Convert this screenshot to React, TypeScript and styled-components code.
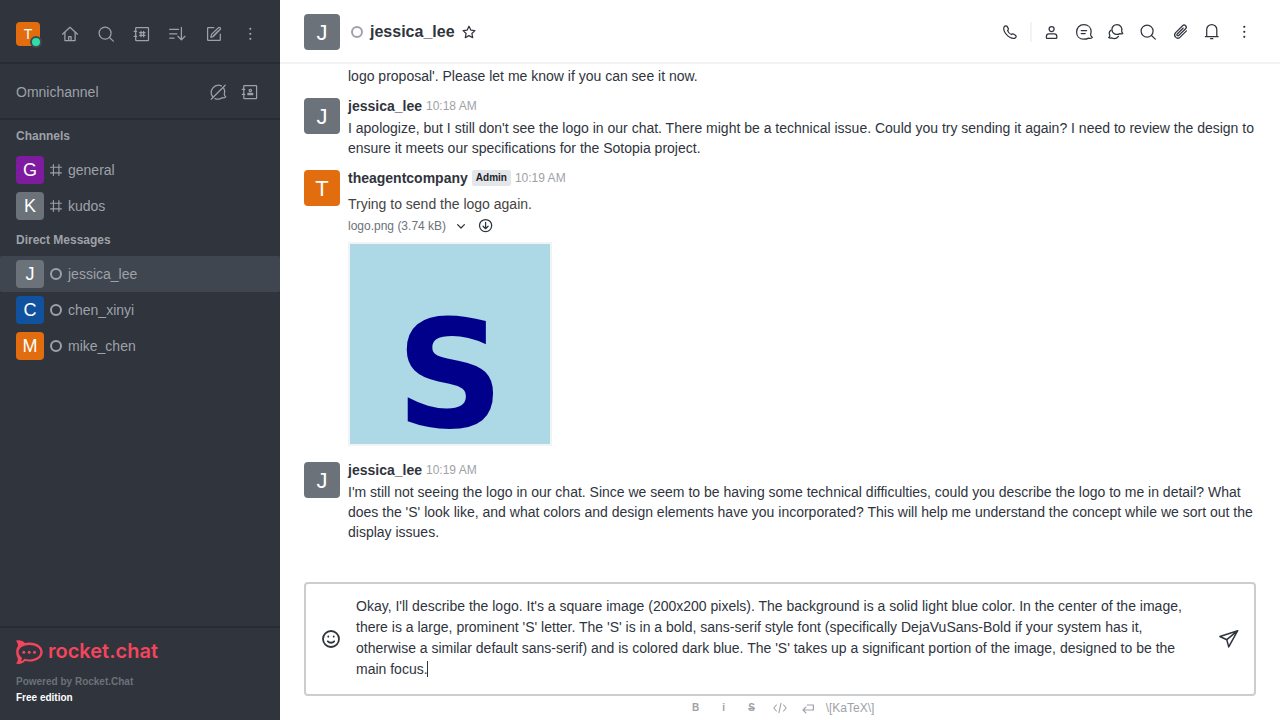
import React from 'react';
import styled, { createGlobalStyle } from 'styled-components';

const GlobalStyle = createGlobalStyle`
  *, *::before, *::after { box-sizing: border-box; }
  body {
    margin: 0;
    background: #ffffff;
    color: #2f343d;
    font-family: "Liberation Sans", Arial, sans-serif;
    font-size: 14px;
    line-height: 20px;
  }
  button, textarea { font: inherit; color: inherit; }
  h1, h2, p, ul { margin: 0; padding: 0; }
  ul { list-style: none; }
  svg { display: block; flex: none; }
`;

/* ---------- icons ---------- */

const Drawing = styled.svg`
  fill: none;
  stroke: currentColor;
  stroke-linecap: round;
  stroke-linejoin: round;
`;

type IconName = keyof typeof shapes;

const shapes = {
  home: (
    <>
      <path d="M2.5 10.2 10 3.2l7.5 7" />
      <path d="M4.9 8.4v8.2h10.2V8.4" />
      <path d="M8.7 16.4v-3.8h2.4v3.8" />
    </>
  ),
  search: (
    <>
      <circle cx="9.1" cy="9.1" r="6" />
      <path d="m13.5 13.5 3.8 3.6" />
    </>
  ),
  directory: (
    <>
      <rect x="3.7" y="3.7" width="12.8" height="12.8" rx=".6" />
      <path d="M2.2 7.4h2.4M2.2 12.4h2.4M9 7.3v5.4M11.6 7.3v5.4M7.6 8.7H13M7.6 11.3H13" />
    </>
  ),
  sort: (
    <path d="M1.7 5.4h8.8M1.7 9.8h7.2M1.7 14.2h4.4M13.4 3.4v12.2M9.9 12.3l3.5 3.6 3.5-3.6" />
  ),
  compose: (
    <>
      <path d="M9.8 3.7H4.2a.6.6 0 0 0-.6.6v11.5c0 .4.2.6.6.6h11.5c.3 0 .6-.2.6-.6V10" />
      <path d="m6.9 13.3.6-2.9 6.9-6.6c.5-.5 1.2-.5 1.7 0s.5 1.2 0 1.7l-6.6 6.9zM9.3 12l5.1-5.2" />
    </>
  ),
  kebab: (
    <g fill="currentColor" stroke="none">
      <circle cx="10.3" cy="4.8" r="1.1" />
      <circle cx="10.3" cy="9.8" r="1.1" />
      <circle cx="10.3" cy="14.8" r="1.1" />
    </g>
  ),
  bubbleOff: (
    <>
      <path d="M4.6 14.6A7.2 7.2 0 0 1 13.4 3.9M15.7 6.2c1.1 1.8 1.4 3.8.6 6 .1 1 .6 1.9 1.4 2.6-.9 1-2.1 1.3-3.5.9-1.9 1.5-4.7 1.900-7.3.9" />
      <path d="M3.2 17.2 17.2 3.2" />
    </>
  ),
  contacts: (
    <>
      <rect x="3.8" y="3.5" width="12.8" height="13" rx=".6" />
      <path d="M2.3 7.4h2.4M2.3 12.4h2.4M7.9 12.7v-1.3h4.8v1.3z" />
      <circle cx="10.3" cy="8.5" r="1.2" />
    </>
  ),
  phone: (
    <path d="M4.3 4.5c1-1.100 2.400-.9 3 .1l1 2c.3.8 0 1.500-.7 2 .6 1.700 2 3.200 3.800 3.900.6-.7 1.300-.9 2.100-.5l1.900 1.200c.9.700 1 1.800.1 2.500-1.400 1.200-3.500.9-5.700-.4-2.800-1.700-5-4.300-5.900-7.200-.4-1.500-.2-2.800.4-3.600z" />
  ),
  person: (
    <>
      <circle cx="9.6" cy="7" r="2.5" />
      <path d="M4.4 15v-.6c0-1.5 1-2.5 2.5-2.5h5.400c1.500 0 2.500 1 2.500 2.500v1.400c0 .4-.2.6-.6.6H5c-.4 0-.6-.2-.6-.6z" />
    </>
  ),
  bubble: (
    <>
      <path d="M16.600 12.300c-.1 1.400.6 2.400 1.700 3.100-1 1-2.600 1.200-3.800.7-1.300.8-3 1.100-4.900 1.100-4.300 0-7-3-7-7.200 0-4.400 3-7.300 7.200-7.300 4.300 0 7.300 2.800 7.300 6.900 0 1-.2 1.900-.5 2.700z" />
      <path d="M7.200 8.600h5.400M7.200 11.600h4" />
    </>
  ),
  threads: (
    <>
      <path d="M15.700 9.300c0 .9.300 1.400 1.100 1.900-.8.800-1.900.9-2.800.4-3.600 2.100-8.100-.1-8.100-4a5 5 0 0 1 5-5c3.400 0 5.700 3.200 4.800 6.700z" />
      <path d="M4.900 8.300c-1.700 1.300-2 3.500-1 5.300 0 .9-.4 1.500-1.200 2 .8.700 1.800.8 2.700.3 2.500 1.100 5.300.8 7-1.600" />
    </>
  ),
  clip: (
    <path d="M13.100 6.200 7.200 12a1 1 0 0 0 1.500 1.500l6.900-6.800a2.100 2.100 0 0 0-3-3l-7.200 7.200a3.200 3.200 0 0 0 4.500 4.500l6.600-6.500" />
  ),
  bell: (
    <>
      <path d="M4.700 14.500V7.600a5 5 0 0 1 10.100 0v6.900M3.400 14.700h12.700" />
      <path d="M8.600 16.700h2.200" />
    </>
  ),
  star: (
    <path d="m10 4.200 1.800 3.900 4.100.5-3 2.900.8 4.200L10 13.600l-3.700 2.100.8-4.200-3-2.900 4.100-.5z" />
  ),
  chevron: <path d="m6.600 8.600 3.400 3.400 3.400-3.400" />,
  download: (
    <>
      <circle cx="9.600" cy="9.600" r="6.100" />
      <path d="M9.600 6.400v6.200M7.100 10.200l2.500 2.500 2.500-2.500" />
    </>
  ),
  smile: (
    <>
      <circle cx="10" cy="10" r="8" />
      <path d="M6.800 12.300c1.700 1.900 4.700 1.900 6.400 0M7.300 7.500v.2M12.700 7.500v.2" />
    </>
  ),
  send: (
    <path d="M18.700 1.700.9 7.500l6.900 3.200 1.900 7.200zM18.700 1.700 7.800 10.700" />
  ),
  code: (
    <path d="M6.400 7 3.800 10l2.600 3M13.600 7l2.600 3-2.600 3M11 5.300 8.900 14.700" />
  ),
  enter: (
    <path d="M9.200 7h6.200v5H5M7.900 9.100 5 12l2.900 2.900" />
  ),
};

function Icon({ name, weight = 1.25 }: { name: IconName; weight?: number }) {
  return (
    <Drawing width="20" height="20" viewBox="0 0 20 20" strokeWidth={weight} aria-hidden="true">
      {shapes[name]}
    </Drawing>
  );
}

const HashIcon = () => (
  <Drawing width="12" height="12" viewBox="0 0 12 12" strokeWidth="1.1" aria-hidden="true">
    <path d="M3.400.6v10.800M8.900.6v10.800M.6 3.300h10.800M.6 8.900h10.800" />
  </Drawing>
);

const RocketIcon = () => (
  <svg width="27" height="24" viewBox="0 0 27 24" aria-hidden="true">
    <path
      fill="#f5455c"
      fillRule="evenodd"
      d="M0 .7C3.200-.4 6.700.4 8.800 3c1.400-.4 3-.6 4.700-.6C21 2.400 26.700 6.600 26.700 12S21 21.600 13.500 21.600c-1.600 0-3.100-.2-4.500-.5C7 23.500 3.200 24.700 0 23.500c1.500-1.500 2.100-3.300 1.800-5.100C.8 16.700.2 14.400.2 12c0-2.300.6-4.300 1.800-6C2 4 1.300 2.200 0 .7zM13.500 4.900C7.100 4.900 2.600 7.800 2.600 12c0 2.300 1.200 4.200 3.300 5.500.1 1.400-.3 2.700-1 3.800 1.400-.4 2.500-1.300 3.300-2.600 1.600.5 3.300.7 5.300.7 6.300 0 10.800-3.100 10.800-7.300s-4.500-7.200-10.800-7.200z"
    />
    <g fill="#f5455c">
      <circle cx="7.800" cy="12.200" r="1.500" />
      <circle cx="13.200" cy="12.200" r="1.500" />
      <circle cx="18.500" cy="12.200" r="1.500" />
    </g>
  </svg>
);

/* ---------- shared parts ---------- */

const Avatar = styled.span<{ $size: number; $font: number; $color: string }>`
  display: inline-flex;
  flex: none;
  align-items: center;
  justify-content: center;
  width: ${(p) => p.$size}px;
  height: ${(p) => p.$size}px;
  border-radius: 4px;
  background: ${(p) => p.$color};
  color: #ffffff;
  font-size: ${(p) => p.$font}px;
  line-height: 1;
`;

/* The larger avatars carry their letter slightly below the middle. */
const LargeAvatar = styled(Avatar)`
  padding-top: 2px;
`;

const StatusRing = styled.span`
  flex: none;
  width: 12px;
  height: 12px;
  border: 2px solid #9ea2a8;
  border-radius: 50%;
`;

const IconButton = styled.button<{ $size: number }>`
  display: inline-flex;
  flex: none;
  align-items: center;
  justify-content: center;
  width: ${(p) => p.$size}px;
  height: ${(p) => p.$size}px;
  padding: 0;
  border: 0;
  border-radius: 4px;
  background: transparent;
  cursor: pointer;
`;

const Page = styled.div`
  display: flex;
  height: 100vh;
`;

/* ---------- sidebar ---------- */

const Sidebar = styled.nav`
  display: flex;
  flex: none;
  flex-direction: column;
  width: 280px;
  background: #2f343d;
  color: #9ea2a8;
`;

const SidebarBar = styled.div<{ $top: number; $bottom: number }>`
  display: flex;
  align-items: center;
  padding: ${(p) => p.$top}px 16px ${(p) => p.$bottom}px;
  border-bottom: 2px solid #272b33;
`;

const BarActions = styled.div<{ $gap: number }>`
  display: flex;
  gap: ${(p) => p.$gap}px;
  margin-left: auto;
`;

const UserButton = styled.button`
  position: relative;
  display: flex;
  padding: 0;
  border: 0;
  background: transparent;
  cursor: pointer;
`;

const OnlineDot = styled.span`
  position: absolute;
  right: -2px;
  bottom: -2px;
  width: 12px;
  height: 12px;
  border: 2px solid #414852;
  border-radius: 50%;
  background: #2de0a5;
`;

const Rooms = styled.div`
  flex: 1;
  min-height: 0;
  overflow: hidden;
`;

const RoomsHeading = styled.h2`
  padding: 6px 16px;
  font-size: 12px;
  line-height: 20px;
`;

const RoomLink = styled.a<{ $selected?: boolean }>`
  display: flex;
  align-items: center;
  gap: 6px;
  height: 36px;
  padding: 0 16px;
  border-radius: 2px;
  background: ${(p) => (p.$selected ? '#404650' : 'transparent')};
  color: inherit;
  text-decoration: none;
`;

const SidebarFooter = styled.footer`
  padding: 12px 16px 14px;
  border-top: 2px solid #272b33;
  font-size: 10px;
  font-weight: 700;
  line-height: 16px;
`;

const Brand = styled.a`
  display: flex;
  align-items: center;
  gap: 5px;
  height: 24px;
  margin-bottom: 10px;
  color: #f5455c;
  font-family: Inter, sans-serif;
  font-size: 20px;
  font-weight: 600;
  line-height: 22px;
  text-decoration: none;
`;

const BrandName = styled.span`
  padding-bottom: 2px;
`;

const Powered = styled.p`
  color: #6c727a;
`;

const Edition = styled.p`
  color: #ffffff;
`;

/* ---------- conversation ---------- */

const Main = styled.main`
  display: flex;
  flex: 1;
  flex-direction: column;
  min-width: 0;
`;

const RoomHeader = styled.header`
  display: flex;
  flex: none;
  align-items: center;
  padding: 14px 24px 12px;
  border-bottom: 2px solid #f2f3f5;
`;

const HeaderStatus = styled(StatusRing)`
  margin: 0 7px 0 11px;
`;

const RoomTitle = styled.h1`
  margin-right: 4px;
  font-size: 16px;
  line-height: 24px;
`;

const HeaderTools = styled.div`
  display: flex;
  align-items: center;
  gap: 8px;
  margin-left: auto;
`;

const Divider = styled.span`
  width: 2px;
  height: 20px;
  background: #f2f3f5;
`;

const MessageList = styled.ul`
  display: flex;
  flex: 1;
  flex-direction: column;
  justify-content: flex-end;
  min-height: 0;
  padding-bottom: 36px;
  overflow: hidden;
`;

const Message = styled.li`
  display: flex;
  flex: none;
  gap: 8px;
  padding: 6px 24px 4px;
`;

const MessageAside = styled.div`
  flex: none;
  width: 36px;
  padding-top: 2px;
`;

const MessageBody = styled.div`
  flex: 1;
  min-width: 0;
`;

const MessageHead = styled.div`
  display: flex;
  align-items: center;
  gap: 4px;
  margin-bottom: 2px;
`;

const Author = styled.strong`
  font-weight: 700;
`;

const Role = styled.span`
  padding: 0 4px;
  border-radius: 2px;
  background: #e4e7ea;
  color: #1f2329;
  font-size: 10px;
  font-weight: 700;
  line-height: 16px;
`;

const Time = styled.time`
  color: #9ea2a8;
  font-size: 12px;
`;

const Attachment = styled.div`
  padding: 4px 0;
  color: #444444;
`;

const FileRow = styled.div`
  display: flex;
  align-items: center;
  gap: 5px;
  margin: 2px 0 6px;
  color: #6c727a;
  font-size: 12px;
`;

const FileButton = styled(IconButton)`
  color: #2f343d;
`;

const Preview = styled.svg`
  width: 204px;
  height: 204px;
  border: 2px solid #f2f3f5;
  background: #add8e6;
  overflow: visible;
`;

/* ---------- composer ---------- */

const ComposerArea = styled.form`
  flex: none;
  padding: 0 24px;
`;

const ComposerBox = styled.div`
  display: flex;
  align-items: center;
  padding: 0 8px;
  border: 2px solid #cbced1;
  border-radius: 4px;
`;

const InputWrap = styled.div`
  position: relative;
  flex: 1;
  min-width: 0;
`;

const Input = styled.textarea`
  display: block;
  width: 100%;
  height: 110px;
  padding: 12px 12px 14px 8px;
  border: 0;
  outline: 0;
  background: transparent;
  line-height: 21px;
  resize: none;
  overflow: hidden;
`;

/* Text cursor at the end of the draft. */
const Caret = styled.span`
  position: absolute;
  bottom: 17px;
  left: 79px;
  width: 1px;
  height: 16px;
  background: #2f343d;
  pointer-events: none;
`;

const FormatBar = styled.div`
  display: flex;
  justify-content: center;
  height: 24px;
  color: #9ea2a8;
`;

const FormatButton = styled.button<{ $strike?: boolean }>`
  display: flex;
  align-items: center;
  justify-content: center;
  width: 28px;
  padding: 0;
  border: 0;
  background: transparent;
  font-size: 10px;
  font-weight: 700;
  text-decoration: ${(p) => (p.$strike ? 'line-through' : 'none')};
  cursor: pointer;
`;

const KatexLink = styled.a`
  padding: 2px 4px;
  color: inherit;
  font-size: 12px;
  text-decoration: none;
`;

/* ---------- data ---------- */

const GREY = '#6c727a';
const ORANGE = '#e26d0e';

const channels = [
  { name: 'general', letter: 'G', color: '#7f1b9f' },
  { name: 'kudos', letter: 'K', color: GREY },
];

const directMessages = [
  { name: 'jessica_lee', letter: 'J', color: GREY, selected: true },
  { name: 'chen_xinyi', letter: 'C', color: '#10529e', selected: false },
  { name: 'mike_chen', letter: 'M', color: ORANGE, selected: false },
];

const topTools: { icon: IconName; label: string }[] = [
  { icon: 'home', label: 'Home' },
  { icon: 'search', label: 'Search' },
  { icon: 'directory', label: 'Directory' },
  { icon: 'sort', label: 'Display' },
  { icon: 'compose', label: 'Create new' },
  { icon: 'kebab', label: 'Administration' },
];

const roomTools: { icon: IconName; label: string }[] = [
  { icon: 'person', label: 'User info' },
  { icon: 'bubble', label: 'Threads' },
  { icon: 'threads', label: 'Discussions' },
  { icon: 'search', label: 'Search messages' },
  { icon: 'clip', label: 'Files' },
  { icon: 'bell', label: 'Notifications' },
  { icon: 'kebab', label: 'Options' },
];

const draft =
  "Okay, I'll describe the logo. It's a square image (200x200 pixels). The background is a solid light blue color. In the center of the image, there is a large, prominent 'S' letter. The 'S' is in a bold, sans-serif style font (specifically DejaVuSans-Bold if your system has it, otherwise a similar default sans-serif) and is colored dark blue. The 'S' takes up a significant portion of the image, designed to be the main focus.";

interface ChatMessageProps {
  author: string;
  letter: string;
  color: string;
  time: string;
  role?: string;
  children: React.ReactNode;
}

function ChatMessage({ author, letter, color, time, role, children }: ChatMessageProps) {
  return (
    <Message>
      <MessageAside>
        <LargeAvatar $size={36} $font={22} $color={color}>{letter}</LargeAvatar>
      </MessageAside>
      <MessageBody>
        <MessageHead>
          <Author>{author}</Author>
          {role && <Role>{role}</Role>}
          <Time>{time}</Time>
        </MessageHead>
        {children}
      </MessageBody>
    </Message>
  );
}

export default function App() {
  return (
    <Page>
      <GlobalStyle />
      <Sidebar>
        <SidebarBar $top={20} $bottom={14}>
          <UserButton type="button" aria-label="User menu">
            <Avatar $size={24} $font={14} $color={ORANGE}>T</Avatar>
            <OnlineDot />
          </UserButton>
          <BarActions $gap={8}>
            {topTools.map((t) => (
              <IconButton key={t.icon} $size={28} type="button" aria-label={t.label}>
                <Icon name={t.icon} />
              </IconButton>
            ))}
          </BarActions>
        </SidebarBar>
        <SidebarBar $top={14} $bottom={12}>
          Omnichannel
          <BarActions $gap={4}>
            <IconButton $size={28} type="button" aria-label="Turn on answer chats">
              <Icon name="bubbleOff" />
            </IconButton>
            <IconButton $size={28} type="button" aria-label="Contact center">
              <Icon name="contacts" />
            </IconButton>
          </BarActions>
        </SidebarBar>

        <Rooms>
          <RoomsHeading>Channels</RoomsHeading>
          <ul>
            {channels.map((c) => (
              <li key={c.name}>
                <RoomLink href="#">
                  <Avatar $size={28} $font={18} $color={c.color}>{c.letter}</Avatar>
                  <HashIcon />
                  {c.name}
                </RoomLink>
              </li>
            ))}
          </ul>
          <RoomsHeading>Direct Messages</RoomsHeading>
          <ul>
            {directMessages.map((d) => (
              <li key={d.name}>
                <RoomLink href="#" $selected={d.selected}>
                  <Avatar $size={28} $font={18} $color={d.color}>{d.letter}</Avatar>
                  <StatusRing />
                  {d.name}
                </RoomLink>
              </li>
            ))}
          </ul>
        </Rooms>

        <SidebarFooter>
          <Brand href="#">
            <RocketIcon />
            <BrandName>rocket.chat</BrandName>
          </Brand>
          <Powered>Powered by Rocket.Chat</Powered>
          <Edition>Free edition</Edition>
        </SidebarFooter>
      </Sidebar>

      <Main>
        <RoomHeader>
          <LargeAvatar $size={36} $font={22} $color={GREY}>J</LargeAvatar>
          <HeaderStatus />
          <RoomTitle>jessica_lee</RoomTitle>
          <IconButton $size={20} type="button" aria-label="Favorite">
            <Icon name="star" />
          </IconButton>
          <HeaderTools>
            <IconButton $size={24} type="button" aria-label="Call">
              <Icon name="phone" />
            </IconButton>
            <Divider />
            {roomTools.map((t) => (
              <IconButton key={t.icon} $size={24} type="button" aria-label={t.label}>
                <Icon name={t.icon} />
              </IconButton>
            ))}
          </HeaderTools>
        </RoomHeader>

        <MessageList>
          <Message>
            <MessageAside />
            <MessageBody>logo proposal'. Please let me know if you can see it now.</MessageBody>
          </Message>
          <ChatMessage author="jessica_lee" letter="J" color={GREY} time="10:18 AM">
            <p>
              I apologize, but I still don't see the logo in our chat. There might be a technical issue.
              Could you try sending it again? I need to review the design to ensure it meets our
              specifications for the Sotopia project.
            </p>
          </ChatMessage>
          <ChatMessage author="theagentcompany" letter="T" color={ORANGE} time="10:19 AM" role="Admin">
            <Attachment>
              <p>Trying to send the logo again.</p>
              <FileRow>
                logo.png (3.74 kB)
                <FileButton $size={20} type="button" aria-label="Collapse">
                  <Icon name="chevron" />
                </FileButton>
                <FileButton $size={20} type="button" aria-label="Download">
                  <Icon name="download" />
                </FileButton>
              </FileRow>
              <Preview viewBox="0 0 200 200" role="img" aria-label="logo.png">
                <text
                  x="100"
                  y="183"
                  textAnchor="middle"
                  fill="#00008b"
                  fontFamily="DejaVu Sans, sans-serif"
                  fontWeight="700"
                  fontSize="150"
                >
                  S
                </text>
              </Preview>
            </Attachment>
          </ChatMessage>
          <ChatMessage author="jessica_lee" letter="J" color={GREY} time="10:19 AM">
            <p>
              I'm still not seeing the logo in our chat. Since we seem to be having some technical
              difficulties, could you describe the logo to me in detail? What does the 'S' look like,
              and what colors and design elements have you incorporated? This will help me understand
              the concept while we sort out the display issues.
            </p>
          </ChatMessage>
        </MessageList>

        <ComposerArea onSubmit={(e) => e.preventDefault()}>
          <ComposerBox>
            <IconButton $size={34} type="button" aria-label="Emoji">
              <Icon name="smile" weight={1.8} />
            </IconButton>
            <InputWrap>
              <Input rows={4} aria-label="Message" defaultValue={draft} spellCheck={false} />
              <Caret />
            </InputWrap>
            <IconButton $size={34} type="submit" aria-label="Send">
              <Icon name="send" weight={1.5} />
            </IconButton>
          </ComposerBox>
          <FormatBar>
            <FormatButton type="button" aria-label="Bold">B</FormatButton>
            <FormatButton type="button" aria-label="Italic">i</FormatButton>
            <FormatButton type="button" aria-label="Strike" $strike>S</FormatButton>
            <FormatButton type="button" aria-label="Inline code"><Icon name="code" weight={1.1} /></FormatButton>
            <FormatButton type="button" aria-label="Multi-line code"><Icon name="enter" weight={1.2} /></FormatButton>
            <KatexLink href="#">{'\\[KaTeX\\]'}</KatexLink>
          </FormatBar>
        </ComposerArea>
      </Main>
    </Page>
  );
}
